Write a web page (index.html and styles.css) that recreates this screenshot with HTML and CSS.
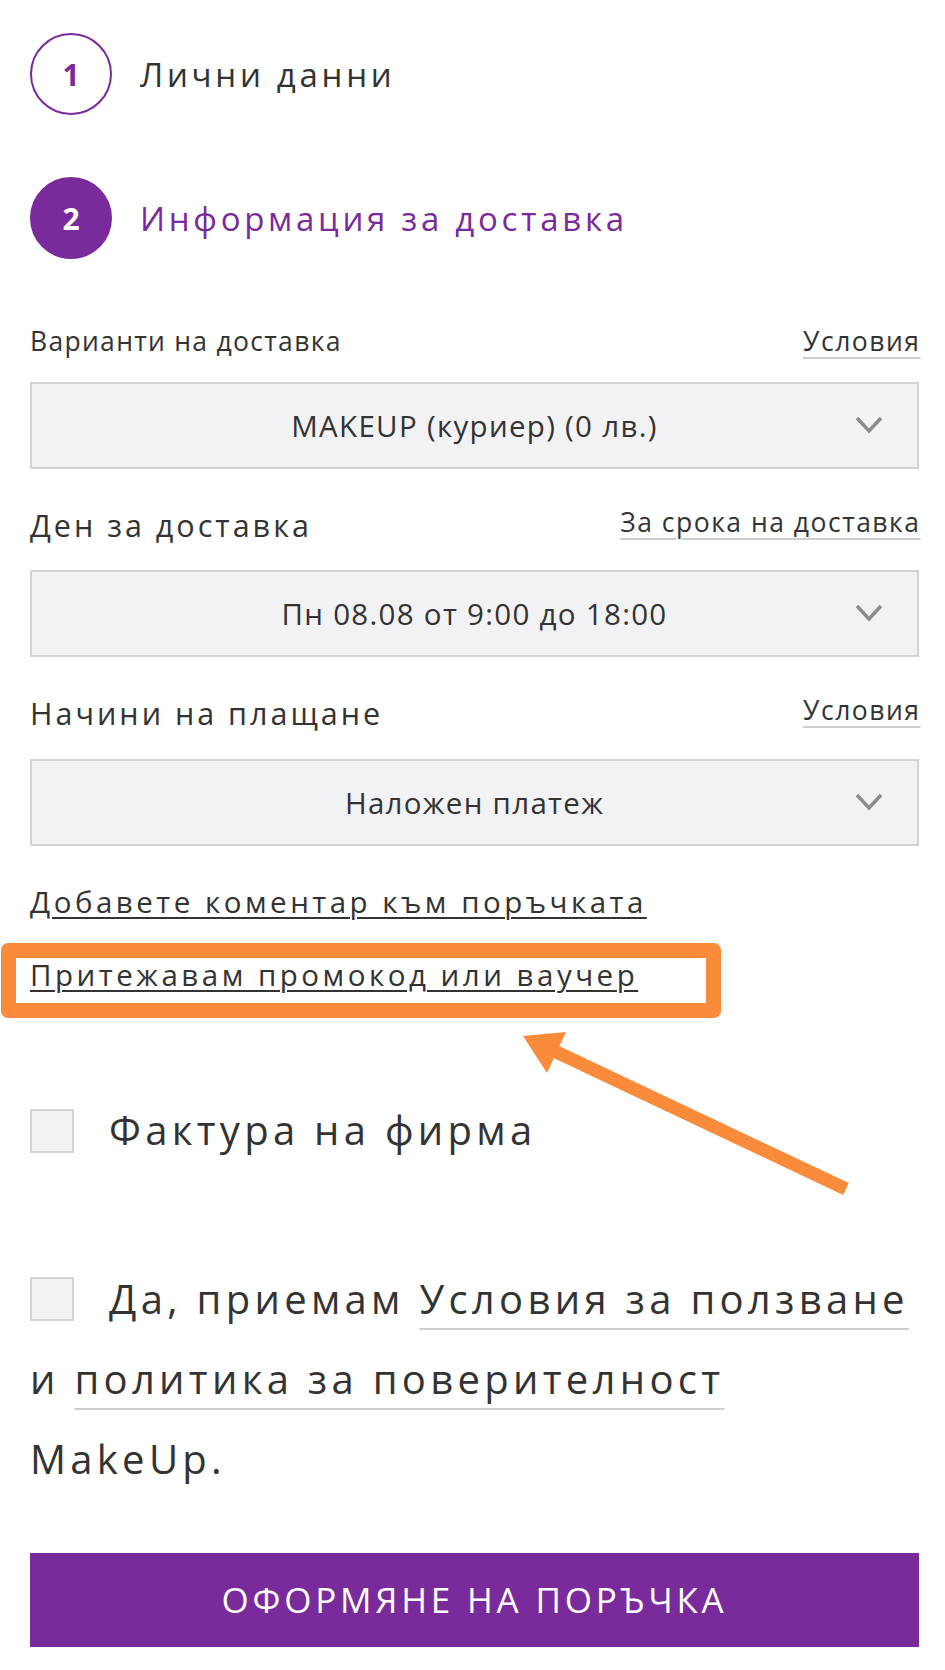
FILE: index.html
```html
<!DOCTYPE html>
<html lang="bg">
<head>
<meta charset="utf-8">
<title>Поръчка</title>
<link rel="stylesheet" href="styles.css">
</head>
<body>
<main class="checkout">
  <div class="step">
    <span class="step-num">1</span>
    <span class="step-title">Лични данни</span>
  </div>
  <div class="step step-active">
    <span class="step-num">2</span>
    <span class="step-title">Информация за доставка</span>
  </div>

  <section class="field field-first">
    <div class="field-head">
      <span class="field-label field-label-sm">Варианти на доставка</span>
      <a class="field-link">Условия</a>
    </div>
    <div class="select">
      <span class="select-value">MAKEUP (куриер) (0 лв.)</span>
      <svg class="chevron" viewBox="0 0 28 20" aria-hidden="true"><path d="M2 3 L14 16 L26 3" /></svg>
    </div>
  </section>

  <section class="field">
    <div class="field-head">
      <span class="field-label">Ден за доставка</span>
      <a class="field-link">За срока на доставка</a>
    </div>
    <div class="select">
      <span class="select-value">Пн 08.08 от 9:00 до 18:00</span>
      <svg class="chevron" viewBox="0 0 28 20" aria-hidden="true"><path d="M2 3 L14 16 L26 3" /></svg>
    </div>
  </section>

  <section class="field">
    <div class="field-head">
      <span class="field-label">Начини на плащане</span>
      <a class="field-link">Условия</a>
    </div>
    <div class="select">
      <span class="select-value">Наложен платеж</span>
      <svg class="chevron" viewBox="0 0 28 20" aria-hidden="true"><path d="M2 3 L14 16 L26 3" /></svg>
    </div>
  </section>

  <p class="action-link comment"><a>Добавете коментар към поръчката</a></p>

  <div class="promo">
    <p class="action-link"><a>Притежавам промокод или ваучер</a></p>
    <span class="highlight" aria-hidden="true"></span>
    <svg class="arrow" viewBox="0 0 400 220" aria-hidden="true">
      <line x1="70" y1="51" x2="366" y2="191" />
      <polygon points="43,38 86,34 67,75" />
    </svg>
  </div>

  <p class="check"><span class="box"></span>Фактура на фирма</p>

  <p class="check terms"><span class="box"></span>Да, приемам <a class="soft-link">Условия за ползване</a><br>и <a class="soft-link">политика за поверителност</a><br>MakeUp.</p>

  <button class="submit" type="button">Оформяне на поръчка</button>
</main>
</body>
</html>
```

FILE: styles.css
```css
html, body {
  margin: 0;
  padding: 0;
  background: #ffffff;
}

body {
  font-family: "Open Sans", "Liberation Sans", sans-serif;
  color: #333333;
}

.checkout {
  padding: 33px 26px 0 30px;
}

a {
  color: inherit;
}

/* steps */
.step {
  display: flex;
  align-items: center;
  gap: 28px;
  height: 82px;
}

.step + .step {
  margin-top: 62px;
}

.step-num {
  box-sizing: border-box;
  width: 82px;
  height: 82px;
  border-radius: 50%;
  border: 2px solid #7a2b9b;
  color: #7a2b9b;
  display: flex;
  align-items: center;
  justify-content: center;
  font-size: 30px;
  font-weight: 700;
}

.step-title {
  font-size: 33px;
  color: #333333;
  letter-spacing: 3.7px;
}

.step-active .step-num {
  background: #7a2b9b;
  color: #ffffff;
}

.step-active .step-title {
  color: #7a2b9b;
}

/* fields */
.field {
  margin-top: 38px;
}

.field-first {
  margin-top: 67px;
}

.field-head {
  display: flex;
  justify-content: space-between;
  align-items: flex-start;
  line-height: 1.2;
  margin-bottom: 27px;
}

.field-first .field-head {
  margin-bottom: 24px;
}

.field-label {
  font-size: 30.5px;
  letter-spacing: 3px;
}

.field-label-sm {
  font-size: 26.5px;
  letter-spacing: 1.3px;
}

.field-link {
  font-size: 26.5px;
  letter-spacing: 1.5px;
  margin-right: -1.5px;
  text-decoration: underline;
  text-decoration-color: #cccccc;
  text-decoration-thickness: 2px;
  text-underline-offset: 6px;
}

.select {
  box-sizing: border-box;
  height: 87px;
  border: 2px solid #d3d3d3;
  background: #f2f2f4;
  display: flex;
  align-items: center;
  justify-content: center;
  position: relative;
}

.select-value {
  font-size: 29.5px;
  letter-spacing: 1.3px;
}

.chevron {
  position: absolute;
  right: 34px;
  top: 31px;
  width: 28px;
  height: 20px;
  fill: none;
  stroke: #8c8c8c;
  stroke-width: 3.5;
}

/* links */
.action-link {
  margin: 0;
  font-size: 29.5px;
  line-height: 1.2;
  letter-spacing: 3.5px;
}

.action-link a {
  text-decoration: underline;
  text-decoration-thickness: 2px;
  text-underline-offset: 4px;
}

.comment {
  margin-top: 38px;
}

.promo {
  position: relative;
  margin-top: 38px;
}

.highlight {
  position: absolute;
  left: -29px;
  top: -14px;
  width: 720px;
  height: 75px;
  box-sizing: border-box;
  border: 15px solid #f98b3b;
  border-radius: 7px;
}

.arrow {
  position: absolute;
  left: 450px;
  top: 41px;
  width: 400px;
  height: 220px;
}

.arrow line {
  stroke: #f98b3b;
  stroke-width: 13;
}

.arrow polygon {
  fill: #f98b3b;
}

/* checkboxes */
.check {
  margin: 97px 0 0;
  font-size: 40px;
  line-height: 80px;
  letter-spacing: 4.3px;
}

.box {
  display: inline-block;
  box-sizing: border-box;
  width: 44px;
  height: 44px;
  border: 2px solid #d3d3d3;
  background: #f2f2f4;
  margin-right: 35px;
  vertical-align: -8px;
}

.terms {
  margin-top: 89px;
}

.terms .box {
  vertical-align: -7px;
}

.soft-link {
  text-decoration: underline;
  text-decoration-color: #cccccc;
  text-decoration-thickness: 2px;
  text-underline-offset: 14px;
}

/* submit */
.submit {
  display: block;
  width: 100%;
  height: 94px;
  margin-top: 54px;
  border: none;
  background: #7a2b9b;
  color: #ffffff;
  font-family: inherit;
  font-size: 35px;
  letter-spacing: 3.8px;
  text-transform: uppercase;
  cursor: pointer;
}
```
